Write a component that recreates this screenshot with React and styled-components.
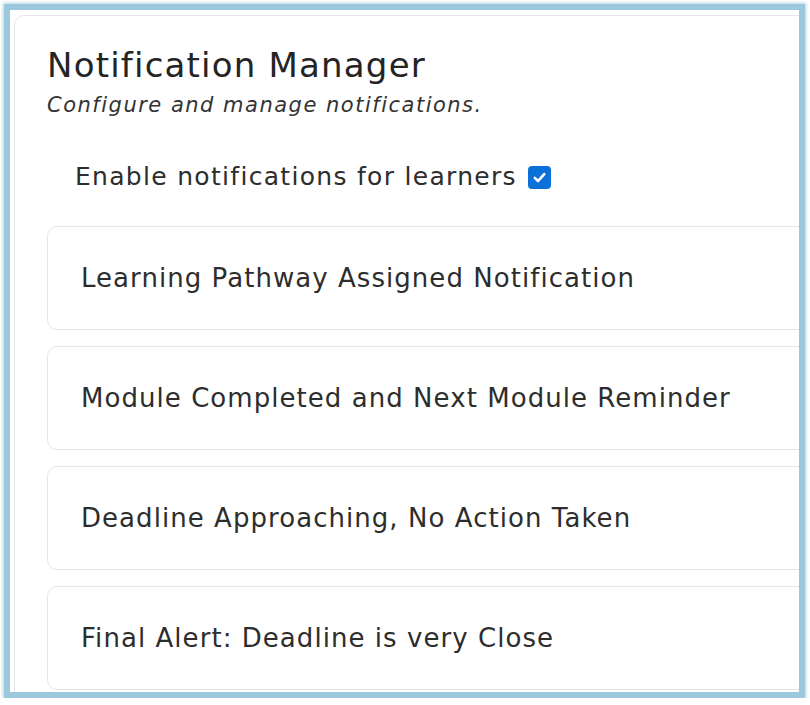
import styled, { createGlobalStyle } from "styled-components";

const GlobalStyle = createGlobalStyle`
  html, body {
    margin: 0;
    padding: 0;
    background: #ffffff;
  }
  body {
    font-family: "DejaVu Sans", "Open Sans", sans-serif;
    color: #2b2b2b;
  }
`;

const notifications = [
  "Learning Pathway Assigned Notification",
  "Module Completed and Next Module Reminder",
  "Deadline Approaching, No Action Taken",
  "Final Alert: Deadline is very Close",
];

export default function App() {
  return (
    <>
      <GlobalStyle />
      <Frame>
        <Panel>
          <Title>Notification Manager</Title>
          <Subtitle>Configure and manage notifications.</Subtitle>
          <EnableRow>
            <span>Enable notifications for learners</span>
            <CheckBox role="checkbox" aria-checked="true">
              <svg width="15" height="15" viewBox="0 0 14 14">
                <path
                  d="M2.6 7.4 L5.6 10.3 L11.4 3.8"
                  fill="none"
                  stroke="#fff"
                  strokeWidth="2.4"
                  strokeLinecap="round"
                  strokeLinejoin="round"
                />
              </svg>
            </CheckBox>
          </EnableRow>
          <List>
            {notifications.map((n) => (
              <Item key={n}>{n}</Item>
            ))}
          </List>
        </Panel>
      </Frame>
    </>
  );
}

const Frame = styled.div`
  margin: 4px 0 0 4px;
  width: 801px;
  height: 694px;
  box-sizing: border-box;
  border: 6px solid #9cc8de;
  box-shadow: 0 0 3px 1px rgba(120, 175, 205, 0.55);
  padding: 5px 0 0 4px;
  overflow: hidden;
`;

const Panel = styled.div`
  width: 820px;
  box-sizing: border-box;
  border: 1px solid #e4e6ea;
  border-radius: 10px;
  padding: 29px 0 40px 32px;
  display: flex;
  flex-direction: column;
`;

const Title = styled.h1`
  margin: 0;
  font-size: 34px;
  font-weight: 400;
  line-height: 40px;
  letter-spacing: 1.2px;
  color: #242424;
`;

const Subtitle = styled.p`
  margin: 8px 0 0;
  font-size: 21px;
  font-style: italic;
  line-height: 24px;
  letter-spacing: 1.5px;
  color: #333;
`;

const EnableRow = styled.label`
  display: flex;
  align-items: center;
  gap: 11px;
  margin: 45px 0 0 28px;
  font-size: 25px;
  line-height: 30px;
  letter-spacing: 1.3px;
  color: #2d2d2d;
`;

const CheckBox = styled.span`
  width: 23px;
  height: 23px;
  border-radius: 4px;
  background: #0b70d8;
  display: inline-flex;
  align-items: center;
  justify-content: center;
`;

const List = styled.div`
  display: flex;
  flex-direction: column;
  gap: 16px;
  margin-top: 34px;
`;

const Item = styled.div`
  height: 104px;
  box-sizing: border-box;
  border: 1px solid #e4e6ea;
  border-radius: 10px;
  padding: 0 0 0 33px;
  display: flex;
  align-items: center;
  font-size: 26px;
  letter-spacing: 1.05px;
  color: #2d2d2d;
`;
